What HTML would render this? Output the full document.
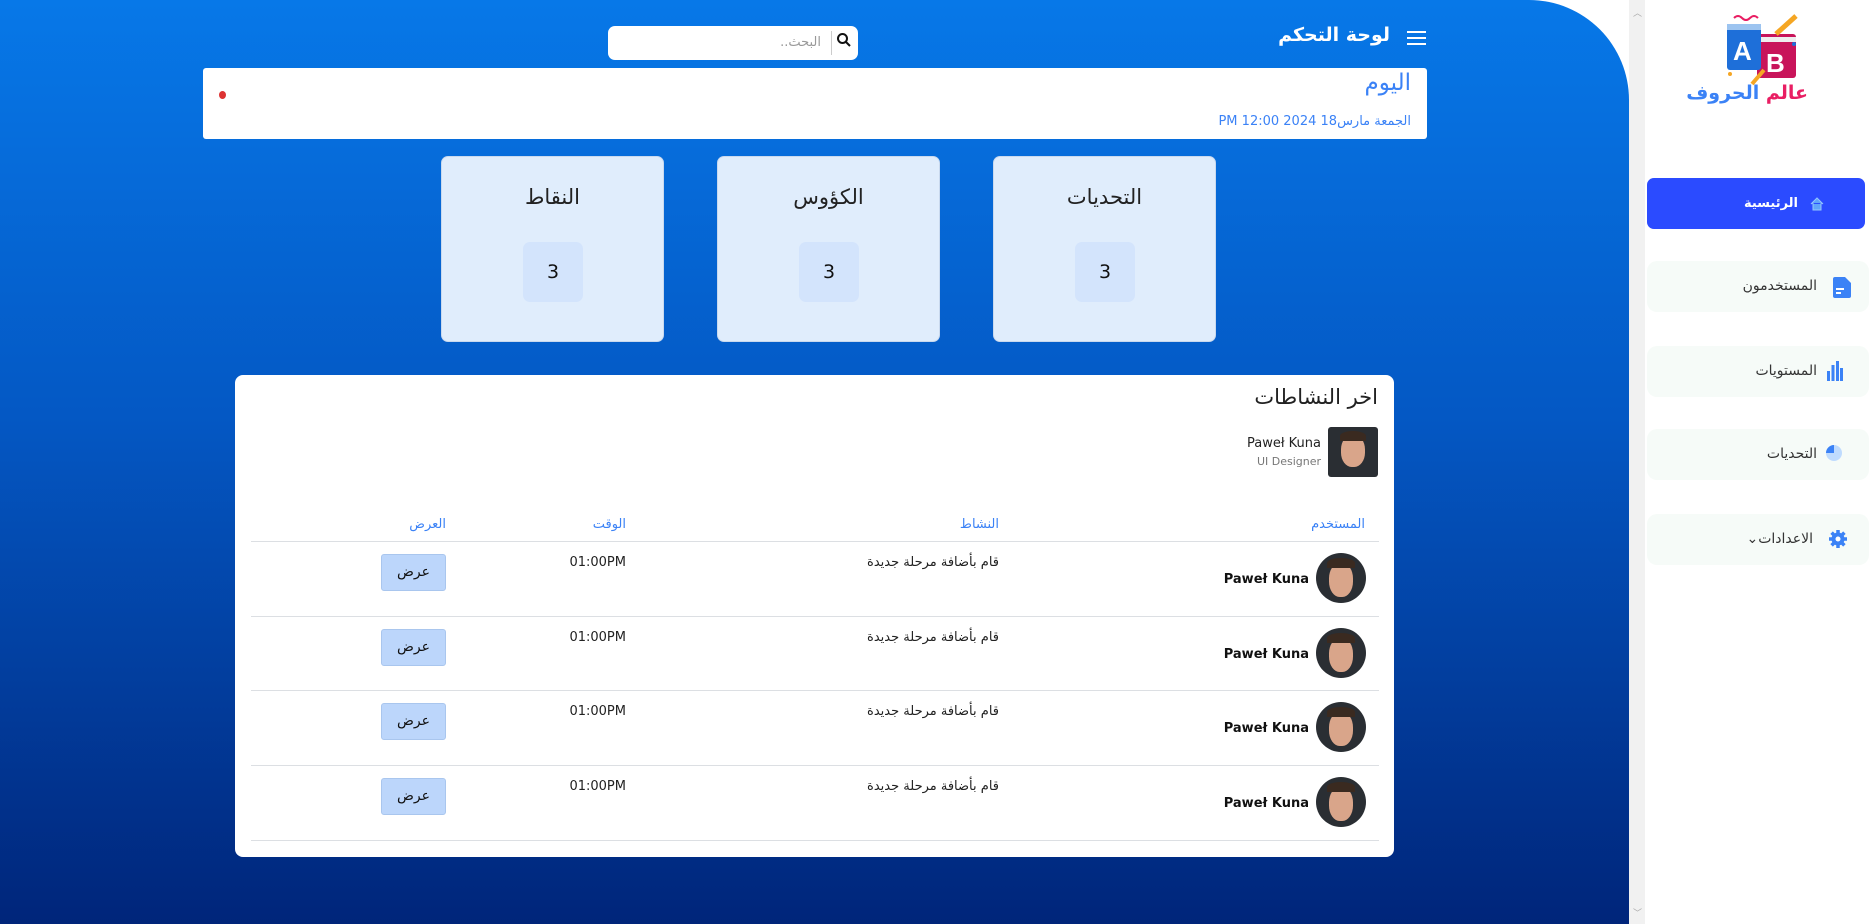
<!DOCTYPE html>
<html><head><meta charset="utf-8"><style>
*{margin:0;padding:0;box-sizing:border-box}
body{width:1869px;height:924px;overflow:hidden;background:#fff;font-family:"DejaVu Sans","Liberation Sans",sans-serif;position:relative}
.a{position:absolute}
#main{left:0;top:0;width:1629px;height:924px;background:linear-gradient(180deg,#0778e8 0%,#0458c4 45%,#00257a 100%);border-top-right-radius:100px}
#sb{left:1629px;top:0;width:16px;height:924px;background:#f1f1f1}
.t{direction:rtl;white-space:nowrap}
.card{background:#e0edfc;border-radius:7px;border:1px solid #c9d9ee}
.num{background:#d3e4fc;border-radius:7px;width:60px;height:60px;left:81px;top:85px;font-size:19px;line-height:60px;text-align:center;color:#111}
.ct{width:100%;text-align:center;top:28px;font-size:21px;color:#222}
.nav{left:1647px;width:222px;height:51px;background:#f6fbf8;border-radius:10px}
.nav span{position:absolute;right:52px;top:17px;font-size:14px;color:#333;direction:rtl}
.av{border-radius:50%;overflow:hidden;background:#2a2e33}
.hl{height:1px;background:#dcdfe3;left:251px;width:1128px}
.btn{left:381px;width:65px;height:37px;background:#bcd6fb;border:1px solid #a9c6ee;border-radius:3px;font-size:14px;text-align:center;line-height:35px;color:#111}
.row{left:0;width:1869px;height:75px}
</style></head><body>
<div id="main" class="a"></div>
<div id="sb" class="a"><div class="a" style="left:4px;top:6px;font-size:9px;color:#aaa">︿</div><div class="a" style="left:4px;top:906px;font-size:9px;color:#aaa">﹀</div></div>

<!-- header -->
<div class="a" style="left:1407px;top:31px;width:19px;height:2px;background:#fff;box-shadow:0 6px 0 #fff,0 12px 0 #fff"></div>
<div class="a t" style="right:479px;top:24px;font-size:19px;font-weight:bold;color:#fff">لوحة التحكم</div>
<div class="a" style="left:608px;top:26px;width:250px;height:34px;background:#fff;border-radius:7px"></div>
<div class="a" style="left:831px;top:31px;width:1px;height:24px;background:#ccc"></div>
<svg class="a" style="left:836px;top:32px" width="16" height="16" viewBox="0 0 16 16"><circle cx="6.5" cy="6.5" r="4.5" fill="none" stroke="#111" stroke-width="2"/><path d="M10 10l4 4" stroke="#111" stroke-width="2"/></svg>
<div class="a t" style="right:1048px;top:35px;font-size:13px;color:#999">البحث..</div>

<!-- today -->
<div class="a" style="left:203px;top:68px;width:1224px;height:71px;background:#fff;border-radius:3px"></div>
<div class="a t" style="right:458px;top:70px;font-size:23px;color:#3b82f6">اليوم</div>
<div class="a t" style="right:458px;top:114px;font-size:13px;color:#3b82f6">الجمعة مارس18 2024 12:00 PM</div>
<div class="a" style="left:219px;top:91px;width:7px;height:8px;border-radius:50%;background:#d33"></div>

<!-- stat cards -->
<div class="a card" style="left:441px;top:156px;width:223px;height:186px"><div class="a t ct">النقاط</div><div class="a num">3</div></div>
<div class="a card" style="left:717px;top:156px;width:223px;height:186px"><div class="a t ct">الكؤوس</div><div class="a num">3</div></div>
<div class="a card" style="left:993px;top:156px;width:223px;height:186px"><div class="a t ct">التحديات</div><div class="a num">3</div></div>

<!-- activity -->
<div class="a" style="left:235px;top:375px;width:1159px;height:482px;background:#fff;border-radius:8px"></div>
<div class="a t" style="right:491px;top:385px;font-size:21px;color:#222">اخر النشاطات</div>
<div class="a av" style="left:1328px;top:427px;width:50px;height:50px;border-radius:3px"><div class="a" style="left:13px;top:8px;width:24px;height:32px;border-radius:45%;background:#d9a58a"></div><div class="a" style="left:12px;top:4px;width:26px;height:10px;border-radius:50% 50% 0 0;background:#3a2a20"></div></div>
<div class="a" style="right:548px;top:436px;font-size:13px;color:#222">Paweł Kuna</div>
<div class="a" style="right:548px;top:455px;font-size:11px;color:#777">UI Designer</div>

<div class="a t" style="right:504px;top:517px;font-size:13px;color:#3b82f6">المستخدم</div>
<div class="a t" style="right:870px;top:517px;font-size:13px;color:#3b82f6">النشاط</div>
<div class="a t" style="right:1243px;top:517px;font-size:13px;color:#3b82f6">الوقت</div>
<div class="a t" style="right:1423px;top:517px;font-size:13px;color:#3b82f6">العرض</div>
<div class="a hl" style="top:541px"></div>

<!-- rows -->
<div class="a row" style="top:541px">
<div class="a av" style="left:1316px;top:12px;width:50px;height:50px"><div class="a" style="left:13px;top:10px;width:24px;height:34px;border-radius:45%;background:#d9a58a"></div><div class="a" style="left:11px;top:5px;width:28px;height:10px;border-radius:50% 50% 0 0;background:#3a2a20"></div></div>
<div class="a" style="right:560px;top:31px;font-size:13px;font-weight:bold;color:#111">Paweł Kuna</div>
<div class="a t" style="right:870px;top:14px;font-size:13px;color:#222">قام بأضافة مرحلة جديدة</div>
<div class="a" style="right:1243px;top:14px;font-size:13px;color:#222">01:00PM</div>
<div class="a btn t" style="top:13px">عرض</div>
<div class="a hl" style="top:75px"></div>
</div>
<div class="a row" style="top:616px">
<div class="a av" style="left:1316px;top:12px;width:50px;height:50px"><div class="a" style="left:13px;top:10px;width:24px;height:34px;border-radius:45%;background:#d9a58a"></div><div class="a" style="left:11px;top:5px;width:28px;height:10px;border-radius:50% 50% 0 0;background:#3a2a20"></div></div>
<div class="a" style="right:560px;top:31px;font-size:13px;font-weight:bold;color:#111">Paweł Kuna</div>
<div class="a t" style="right:870px;top:14px;font-size:13px;color:#222">قام بأضافة مرحلة جديدة</div>
<div class="a" style="right:1243px;top:14px;font-size:13px;color:#222">01:00PM</div>
<div class="a btn t" style="top:13px">عرض</div>
<div class="a hl" style="top:74px"></div>
</div>
<div class="a row" style="top:690px">
<div class="a av" style="left:1316px;top:12px;width:50px;height:50px"><div class="a" style="left:13px;top:10px;width:24px;height:34px;border-radius:45%;background:#d9a58a"></div><div class="a" style="left:11px;top:5px;width:28px;height:10px;border-radius:50% 50% 0 0;background:#3a2a20"></div></div>
<div class="a" style="right:560px;top:31px;font-size:13px;font-weight:bold;color:#111">Paweł Kuna</div>
<div class="a t" style="right:870px;top:14px;font-size:13px;color:#222">قام بأضافة مرحلة جديدة</div>
<div class="a" style="right:1243px;top:14px;font-size:13px;color:#222">01:00PM</div>
<div class="a btn t" style="top:13px">عرض</div>
<div class="a hl" style="top:75px"></div>
</div>
<div class="a row" style="top:765px">
<div class="a av" style="left:1316px;top:12px;width:50px;height:50px"><div class="a" style="left:13px;top:10px;width:24px;height:34px;border-radius:45%;background:#d9a58a"></div><div class="a" style="left:11px;top:5px;width:28px;height:10px;border-radius:50% 50% 0 0;background:#3a2a20"></div></div>
<div class="a" style="right:560px;top:31px;font-size:13px;font-weight:bold;color:#111">Paweł Kuna</div>
<div class="a t" style="right:870px;top:14px;font-size:13px;color:#222">قام بأضافة مرحلة جديدة</div>
<div class="a" style="right:1243px;top:14px;font-size:13px;color:#222">01:00PM</div>
<div class="a btn t" style="top:13px">عرض</div>
<div class="a hl" style="top:75px"></div>
</div>

<!-- sidebar logo -->
<svg class="a" style="left:1724px;top:14px" width="76" height="72" viewBox="0 0 76 72">
<path d="M10 4q4-4 8 0t8 0t8 0" stroke="#e91e63" fill="none" stroke-width="2"/>
<rect x="33" y="20" width="39" height="44" rx="3" fill="#c8145a"/>
<rect x="36" y="23" width="36" height="5" fill="#eee"/>
<rect x="3" y="10" width="34" height="46" rx="3" fill="#1e6fd9"/>
<rect x="3" y="10" width="34" height="6" fill="#9cc4f0"/>
<text x="9" y="46" font-family="Liberation Sans" font-weight="bold" font-size="26" fill="#fff">A</text>
<text x="42" y="58" font-family="Liberation Sans" font-weight="bold" font-size="26" fill="#fff">B</text>
<path d="M52 20L72 2" stroke="#f5a623" stroke-width="5"/>
<path d="M40 56L28 70" stroke="#f5a623" stroke-width="4"/>
<circle cx="6" cy="60" r="2" fill="#f5a623"/><circle cx="70" cy="30" r="2" fill="#1e6fd9"/>
</svg>
<div class="a t" style="left:1708px;top:82px;width:100px;text-align:center;font-size:19px;font-weight:bold"><span style="color:#e91e63">عالم </span><span style="color:#3b82f6">الحروف</span></div>

<!-- nav -->
<div class="a" style="left:1647px;top:178px;width:218px;height:51px;background:#2b4bff;border-radius:7px"></div>
<div class="a t" style="right:71px;top:196px;font-size:13px;font-weight:bold;color:#fff">الرئيسية</div>
<svg class="a" style="left:1810px;top:197px" width="14" height="14" viewBox="0 0 14 14"><path d="M1 7L7 1l6 6M3 6v7h8V6" fill="#60a5fa" stroke="#93c5fd"/></svg>

<div class="a nav" style="top:261px"><span>المستخدمون</span><svg class="a" style="right:18px;top:16px" width="18" height="21" viewBox="0 0 18 21"><path d="M0 2a2 2 0 012-2h10l6 6v13a2 2 0 01-2 2H2a2 2 0 01-2-2z" fill="#3b82f6"/><rect x="3" y="11" width="8" height="2" fill="#fff"/><rect x="3" y="15" width="5" height="2" fill="#fff"/></svg></div>
<div class="a nav" style="top:346px"><span>المستويات</span><svg class="a" style="right:26px;top:15px" width="16" height="20" viewBox="0 0 16 20"><rect x="0" y="10" width="3" height="10" fill="#3b82f6"/><rect x="4.5" y="4" width="3" height="16" fill="#3b82f6"/><rect x="9" y="0" width="3" height="20" fill="#3b82f6"/><rect x="13" y="7" width="3" height="13" fill="#3b82f6"/></svg></div>
<div class="a nav" style="top:429px"><span>التحديات</span><svg class="a" style="right:26px;top:15px" width="18" height="18" viewBox="0 0 18 18"><circle cx="9" cy="9" r="8" fill="#bfdbfe"/><path d="M9 9V1a8 8 0 00-8 8z" fill="#3b82f6"/></svg></div>
<div class="a nav" style="top:514px"><span style="right:56px">الاعدادات⌄</span><svg class="a" style="right:22px;top:16px" width="18" height="18" viewBox="0 0 18 18"><circle cx="9" cy="9" r="6.5" fill="#3b82f6"/><g stroke="#3b82f6" stroke-width="3.5"><path d="M9 0v18M0 9h18M2.6 2.6l12.8 12.8M15.4 2.6L2.6 15.4"/></g><circle cx="9" cy="9" r="2.5" fill="#fff"/></svg></div>
</body></html>
